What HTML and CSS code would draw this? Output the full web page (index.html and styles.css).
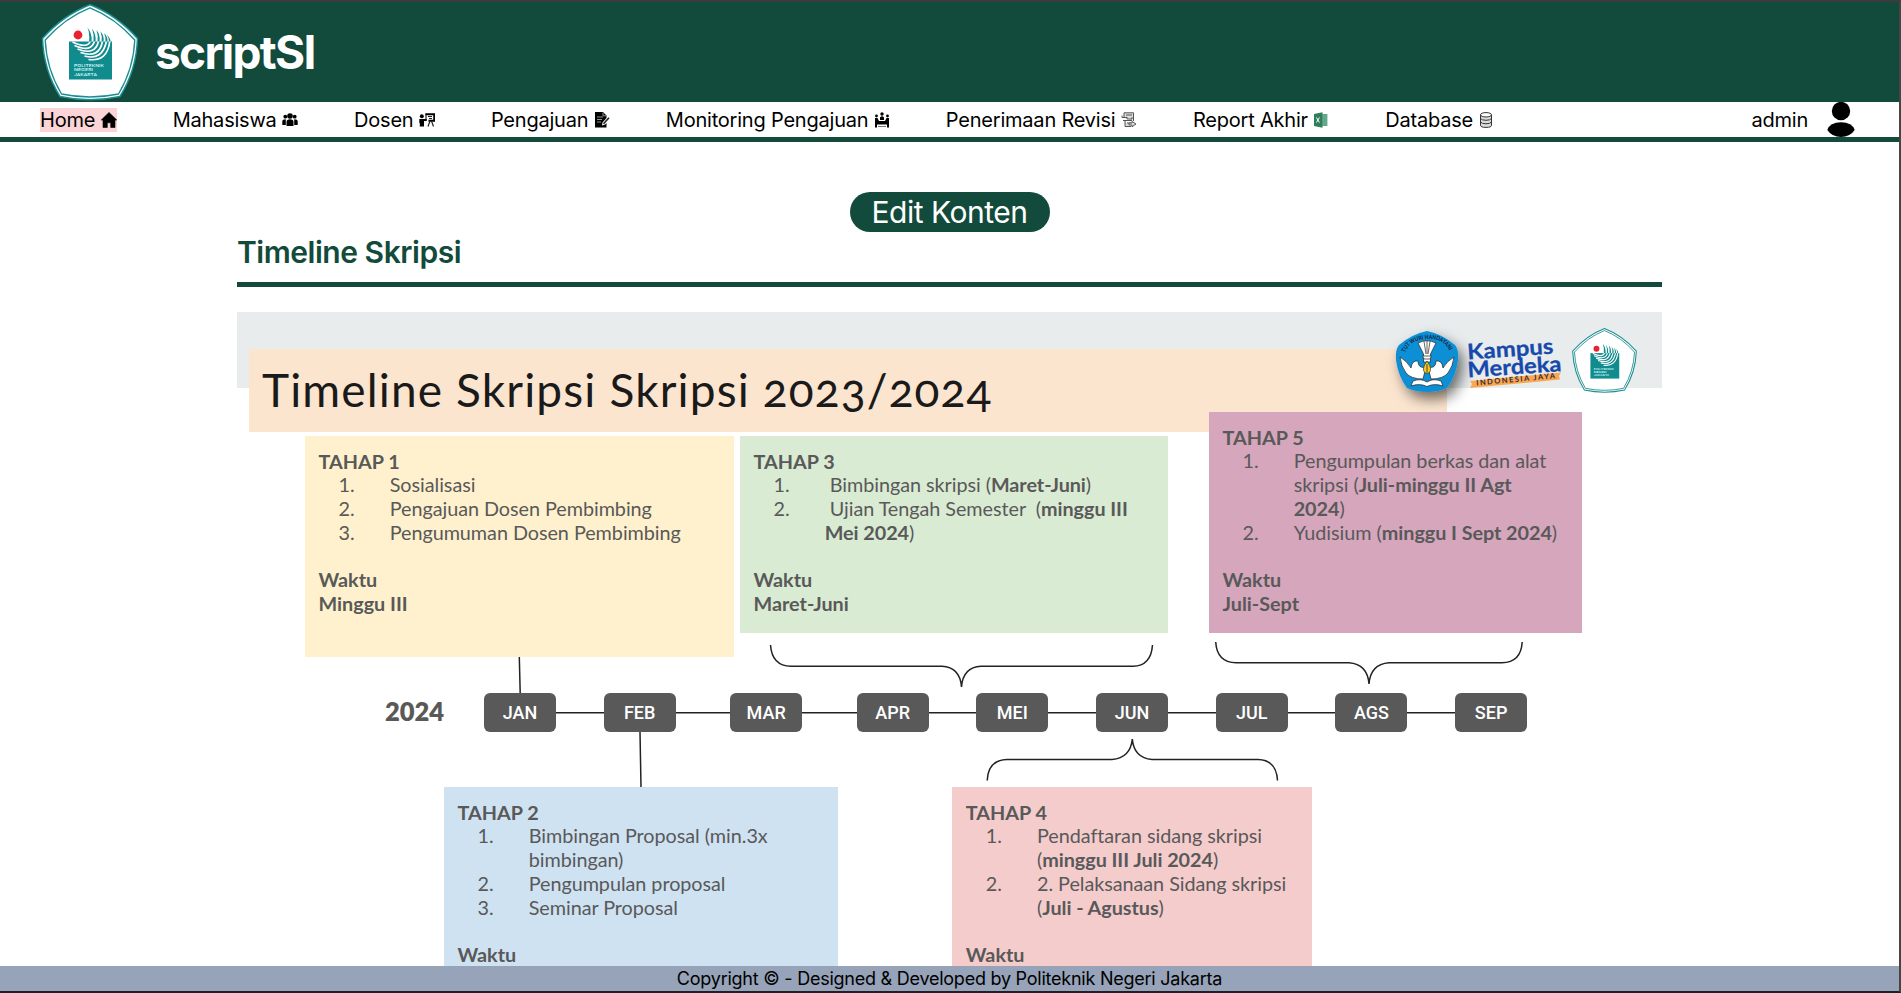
FILE: index.html
```html
<!DOCTYPE html>
<html lang="id">
<head>
<meta charset="utf-8">
<title>scriptSI</title>
<link rel="stylesheet" href="styles.css">
</head>
<body>
<svg class="defs" width="0" height="0">
  <symbol id="pnj" viewBox="0 0 97 97">
    <path d="M48.500 .8Q75 11 96 34.500Q95 66 78.500 92.500Q48.500 99 18.500 92.500Q2 66 1 34.500Q22 11 48.500 .8Z" fill="#fff" stroke="#1b8d90" stroke-width="1.500"/>
    <path d="M48.500 3.800Q74 14 93.300 36Q92 65 77 90Q48.500 96 20 90Q5 65 3.700 36Q23 14 48.500 3.800Z" fill="none" stroke="#1b8d90" stroke-width="1.300"/>
    <rect x="27.500" y="37.500" width="43" height="38" fill="#108b8e"/>
    <g fill="none" stroke="#fff" stroke-width="1.700">
      <path d="M31 38Q46 45 49 37"/><path d="M33 41.500Q50 49 53 37"/><path d="M36 45Q54 52 57 37"/>
      <path d="M39 48.500Q58 55 61 37"/><path d="M43 52Q61 57 65 37"/><path d="M47 55.500Q66 58 68.300 37"/>
    </g>
    <g fill="#108b8e">
      <path d="M46 23.500Q51 30 50 37.500H47.500Q48.500 30 46 23.500Z"/><path d="M50.500 24.500Q55 31 54 37.500H52Q53 31 50.500 24.500Z"/>
      <path d="M55 26Q59 31 58 37.500H56Q57 32 55 26Z"/><path d="M59 27.500Q63 32 62 37.500H60Q61 33 59 27.500Z"/>
      <path d="M62.500 29Q66.500 33 66 37.500H64Q64.500 33 62.500 29Z"/><path d="M65.500 31Q69 34 69 37.500H67.500Q67.500 34 65.500 31Z"/>
    </g>
    <circle cx="36.500" cy="31" r="4.400" fill="#e9232e"/>
    <g class="pnj-text"><text x="32.500" y="62.500" textLength="30" lengthAdjust="spacingAndGlyphs">POLITEKNIK</text><text x="32.500" y="67.400" textLength="19" lengthAdjust="spacingAndGlyphs">NEGERI</text><text x="32.500" y="72.300" textLength="23" lengthAdjust="spacingAndGlyphs">JAKARTA</text></g>
  </symbol>
</svg>

<header class="top">
  <svg class="top-logo"><use href="#pnj"/></svg>
  <h1 class="brand">scriptSI</h1>
</header>

<nav class="nav">
  <a class="item active">Home <svg class="ico" viewBox="0 0 16 16"><path d="M8 .4 15.800 8H14v7.500H9.700v-4.700H6.300v4.700H2V8H.2Z" stroke="#000" stroke-linejoin="round" stroke-width=".6"/></svg></a>
  <a class="item">Mahasiswa <svg class="ico" viewBox="0 0 16 16"><circle cx="8" cy="4" r="2.800"/><circle cx="3.300" cy="4.700" r="1.900"/><circle cx="12.700" cy="4.700" r="1.900"/><path d="M4.500 14V10Q4.500 7.300 8 7.300T11.500 10V14ZM.3 13V9.500Q.3 7.300 3.800 7.300V13ZM15.700 13V9.500Q15.700 7.300 12.200 7.300V13Z"/></svg></a>
  <a class="item">Dosen <svg class="ico" viewBox="0 0 16 16"><circle cx="2.800" cy="4.300" r="2"/><path d="M.3 7H7.800V9H5V14.500H.8V11H.3Z"/><path d="M6.300 2.200H15.200V8.800H9.500" fill="none" stroke="#000" stroke-width="1.900"/><path d="M9 4.500h4M10 6.500h3M11 9 9 14.500M12.500 9l2 5.500M7 3v5" fill="none" stroke="#222" stroke-width="1.200"/></svg></a>
  <a class="item">Pengajuan <svg class="ico" viewBox="0 0 16 16"><path d="M1 0H9L12.500 3.500V6L8.500 10.500 8 13.500 11 12.500 12.500 11V15.500H1Z"/><path d="M3 5h6M3 7.500h5M3 10h4M9 .5V3.800H12" fill="none" stroke="#bbb" stroke-width=".8"/><path d="M9.500 11.800 15 5.800" stroke="#222" stroke-width="1.600"/></svg></a>
  <a class="item">Monitoring Pengajuan <svg class="ico" viewBox="0 0 16 16"><circle cx="8" cy="2" r="1.700"/><circle cx="2.500" cy="4" r="1.400"/><circle cx="13.500" cy="4" r="1.400"/><path d="M6 8V5.500Q8 3 10 5.500V8ZM1 6H3.500L5 9H11L12.500 6H15V12.500H1ZM3 12.500V15.500H1V12.500ZM15 12.500V15.500H13V12.500Z"/><path d="M4 14.500h8" stroke="#777"/></svg></a>
  <a class="item">Penerimaan Revisi <svg class="ico" viewBox="0 0 16 16" fill="none" stroke="#555"><path d="M3 5V.8H12.500V9M4 9V14.500H10" fill="#ddd"/><path d="M5 3h6M1 3.500V5.500H6M6 5v2h5V5M2 8.500h9M6 11h4" /><path d="M11 9.500 15 12 11 14.800V13H8v-2h3Z" fill="#ddd"/></svg></a>
  <a class="item">Report Akhir <svg class="ico" viewBox="0 0 16 16"><path d="M9 2h5.500v12H9Z" fill="#7fb89f"/><path d="M11 2v12M13 2v12" stroke="#3e8d6b" stroke-width=".8"/><path d="M1 2 9.500 .3V15.700L1 14Z" fill="#2f7d5b"/><path d="M3.400 5.500 6.400 10.500M6.400 5.500 3.400 10.500" stroke="#fff"/></svg></a>
  <a class="item">Database <svg class="ico" viewBox="0 0 16 16" fill="#ddd" stroke="#333"><path d="M2.500 2.800V13.200Q2.500 15.400 8 15.400T13.500 13.200V2.800"/><ellipse cx="8" cy="2.800" rx="5.500" ry="2.200" fill="#fff"/><path d="M2.500 6.300Q3.500 8.300 8 8.300T13.500 6.300M2.500 9.800Q3.500 11.800 8 11.800T13.500 9.800" fill="none"/></svg></a>
  <div class="user"><span>admin</span><svg class="avatar" viewBox="0 0 28 35"><circle cx="14" cy="9" r="9.200"/><path d="M.3 28Q3 20.300 14 20.300T27.700 28Q23 35 14 35T.3 28Z"/></svg></div>
</nav>

<main class="content">
  <a class="edit">Edit Konten</a>
  <h2 class="heading">Timeline Skripsi</h2>

  <section class="board">
    <div class="band"></div>
    <div class="banner">Timeline Skripsi Skripsi 2023/2024</div>

    <svg class="wires" viewBox="237 312 1425 654">
      <g fill="none" stroke="#222" stroke-width="1.500">
        <path d="M519.300 657L520.200 693M640 732L641 787M520 712.700H1490"/>
        <path d="M770.500 645Q772 666 791 666.200H942Q960 667 961.500 687Q963 667 981 666.200H1133Q1151 666 1152.500 645"/>
        <path d="M1215.700 642Q1217 662.500 1236 662.700H1349Q1367.500 664 1369 684Q1370.500 664 1389 662.700H1502Q1521 662.500 1522.200 642"/>
        <path d="M987.200 780.500Q988 760 1007 759.500H1112Q1130.500 758 1132.300 739Q1134 758 1152 759.500H1258Q1276.500 760 1277.500 780.500"/>
      </g>
    </svg>

    <div class="months">
      <b class="label">2024</b>
      <span class="m">JAN</span><span class="m g48">FEB</span><span class="m g55">MAR</span><span class="m g55">APR</span><span class="m g48">MEI</span><span class="m g48">JUN</span><span class="m g48">JUL</span><span class="m g48">AGS</span><span class="m g48">SEP</span>
    </div>

    <article class="card c1"><b>TAHAP 1</b>
      <ol><li><p>Sosialisasi</p></li><li><p>Pengajuan Dosen Pembimbing</p></li><li><p>Pengumuman Dosen Pembimbing</p></li></ol>
      <b>Waktu<br>Minggu III</b></article>
    <article class="card c3"><b>TAHAP 3</b>
      <ol><li><p>&nbsp;Bimbingan skripsi (<b>Maret-Juni</b>)</p></li><li><p>&nbsp;Ujian Tengah Semester&nbsp; (<b>minggu III<br>Mei 2024</b>)</p></li></ol>
      <b>Waktu<br>Maret-Juni</b></article>
    <article class="card c2"><b>TAHAP 2</b>
      <ol><li><p>Bimbingan Proposal (min.3x<br>bimbingan)</p></li><li><p>Pengumpulan proposal</p></li><li><p>Seminar Proposal</p></li></ol>
      <b>Waktu</b></article>
    <article class="card c4"><b>TAHAP 4</b>
      <ol><li><p>Pendaftaran sidang skripsi<br>(<b>minggu III Juli 2024</b>)</p></li><li><p>2. Pelaksanaan Sidang skripsi<br>(<b>Juli - Agustus</b>)</p></li></ol>
      <b>Waktu</b></article>

    <svg class="logos" viewBox="1360 312 302 130">
      <defs><filter id="sh" x="-50%" y="-50%" width="200%" height="200%"><feDropShadow dx="5" dy="7" stdDeviation="7" flood-color="#000" flood-opacity=".55"/></filter>
      <path id="arc" d="M1405 352.500Q1410 340 1427 339T1450 352.500"/></defs>
      <path filter="url(#sh)" d="M1427 331Q1442 334 1455 345Q1459 350 1458 360Q1456 376 1447 388Q1438 392 1427 392T1407 388Q1398 376 1396 360Q1395 350 1399 345Q1412 334 1427 331Z" fill="#0c8fd6"/>
      <text class="twh"><textPath href="#arc" textLength="54" lengthAdjust="spacingAndGlyphs">TUT WURI HANDAYANI</textPath></text>
      <g fill="#fff" stroke="#222" stroke-width=".7" stroke-linejoin="round">
        <path d="M1418 343Q1427 338.500 1436 343L1430.500 354V362H1423.500V354Z"/>
        <path d="M1424 341.500 1426 354M1427 341V354M1430 341.500 1428 354" fill="none"/>
        <path d="M1400 357Q1401 366 1406 373Q1411 379 1423 379L1426 367Q1418 369 1418 361Q1412 360 1411 368Q1407 361 1400 357Z"/>
        <path d="M1454 357Q1453 366 1448 373Q1443 379 1431 379L1428 367Q1436 369 1436 361Q1442 360 1443 368Q1447 361 1454 357Z"/>
        <path d="M1413 381Q1421 378 1427 382Q1433 378 1441 381L1443 386Q1434 383 1427 386.500Q1420 383 1411 386Z"/>
        <path d="M1422.500 356H1431.500L1430 359H1424Z"/>
      </g>
      <path d="M1427 361Q1433 369 1429 373H1425Q1421 369 1427 361Z" fill="#f8c91b" stroke="#333" stroke-width=".7"/><path d="M1427 364V372" stroke="#444"/>
      <g class="km" transform="rotate(-4 1469 362)"><text x="1468" y="359.500" textLength="86" lengthAdjust="spacingAndGlyphs">Kampus</text><text x="1467" y="377.500" textLength="94" lengthAdjust="spacingAndGlyphs">Merdeka</text></g>
      <path d="M1470 381 1561 372.600 1559 376 1560 379.500 1470 388 1472 384Z" fill="#f9a755"/>
      <text class="jaya" transform="translate(1476.500 385.500) rotate(-5.300)" textLength="79">INDONESIA JAYA</text>
      <use href="#pnj" x="1572" y="328" width="65" height="65"/>
    </svg>

    <article class="card c5"><b>TAHAP 5</b>
      <ol><li><p>Pengumpulan berkas dan alat<br>skripsi (<b>Juli-minggu II Agt<br>2024</b>)</p></li><li><p>Yudisium (<b>minggu I Sept 2024</b>)</p></li></ol>
      <b>Waktu<br>Juli-Sept</b></article>
  </section>
</main>

<footer class="foot">Copyright © - Designed &amp; Developed by Politeknik Negeri Jakarta</footer>
</body>
</html>
```

FILE: styles.css
```css
* { box-sizing: border-box; margin: 0; padding: 0; }
body {
  height: 993px;
  overflow: hidden;
  display: flex;
  flex-direction: column;
  border-top: 2px solid #3c3c3c;
  border-right: 2px solid #454545;
  border-bottom: 2px solid #1f2026;
  background: #fff;
  font-family: Inter, sans-serif;
  color: #000;
}
.defs { position: absolute; }
.pnj-text { font: 500 4px Inter, sans-serif; fill: #dff; }

.top { flex: none; height: 100px; padding-left: 41px; display: flex; align-items: center; gap: 16px; background: #124a3b; }
.top-logo { width: 98px; height: 97px; }
.brand { font-size: 46px; line-height: 56px; font-weight: 700; color: #fff; letter-spacing: -1.700px; }

.nav { flex: none; height: 40px; padding: 0 44px 0 40px; display: flex; align-items: center; gap: 56px; border-bottom: 5px solid #124a3b; font-size: 20px; line-height: 24px; letter-spacing: -.21px; }
.item { display: block; white-space: nowrap; }
.active { background: #fad4d6; }
.ico { width: 16px; height: 16px; display: inline-block; vertical-align: -1.500px; }
.user { margin-left: auto; display: flex; align-items: center; gap: 19px; }
.avatar { width: 28px; height: 35px; display: block; }

.content { flex: 1; min-height: 0; padding: 50px 237px 0; display: flex; flex-direction: column; }
.edit { align-self: center; width: 200px; height: 40px; border-radius: 20px; background: #124a3b; color: #fff; font-size: 30px; line-height: 40px; letter-spacing: -.48px; text-align: center; }
.heading { height: 55px; border-bottom: 5px solid #124a3b; color: #124a3b; font-size: 30px; line-height: 41px; font-weight: 600; letter-spacing: -.46px; }

.board { position: relative; flex: 1; min-height: 0; margin-top: 25px; overflow: hidden; font-family: Lato, sans-serif; color: #595959; }
.band { height: 76px; background: #e8ecec; }
.banner { position: absolute; left: 12px; top: 37px; width: 1198px; height: 83px; padding-left: 13px; background: #fce5cf; color: #1a1a1a; font-size: 46px; line-height: 81px; letter-spacing: 1.140px; white-space: nowrap; font-feature-settings: "onum"; }
.wires { position: absolute; left: 0; top: 0; width: 1425px; height: 654px; }
.logos { position: absolute; left: 1123px; top: 0; width: 302px; height: 130px; }
.twh { font: 700 6px Lato, sans-serif; fill: #10233a; }
.km { font: 700 21.500px Lato, sans-serif; fill: #1649ab; stroke: #1649ab; stroke-width: .3; }
.jaya { font: 700 7.500px Lato, sans-serif; fill: #3b2a28; }

.months { position: absolute; left: 148px; top: 381px; height: 39px; display: flex; align-items: center; }
.label { width: 99px; padding-bottom: 4px; font-size: 25.500px; font-weight: 800; }
.m { width: 72px; height: 39px; border-radius: 6px; background: #595959; color: #fff; font: 500 18px/40px Roboto, sans-serif; text-align: center; }
.g48 { margin-left: 47.700px; }
.g55 { margin-left: 54.500px; }

.card { position: absolute; padding: 13.500px 0 0 13.500px; font-size: 19.800px; line-height: 23.800px; white-space: nowrap; }
.card ol { list-style: none; counter-reset: n; margin-bottom: 23.800px; }
.card li { display: flex; padding-left: 20px; counter-increment: n; }
.card li::before { content: counter(n) "."; width: 51.200px; flex: none; }
.card p { letter-spacing: -.04px; }
.c1 { left: 68px; top: 124px; width: 428.500px; height: 221px; background: #fff1cd; }
.c3 { left: 503px; top: 124px; width: 428px; height: 196.500px; background: #d9ebd3; }
.c2 { left: 207px; top: 475px; width: 393.500px; height: 240px; background: #cfe2f2; }
.c4 { left: 715.300px; top: 475px; width: 359.500px; height: 240px; background: #f4cccc; }
.c5 { left: 972px; top: 100px; width: 373px; height: 220.500px; background: #d5a6bc; }

.foot { flex: none; height: 25px; background: #96a3b9; font-size: 18px; line-height: 25px; letter-spacing: -.24px; text-align: center; }
```
